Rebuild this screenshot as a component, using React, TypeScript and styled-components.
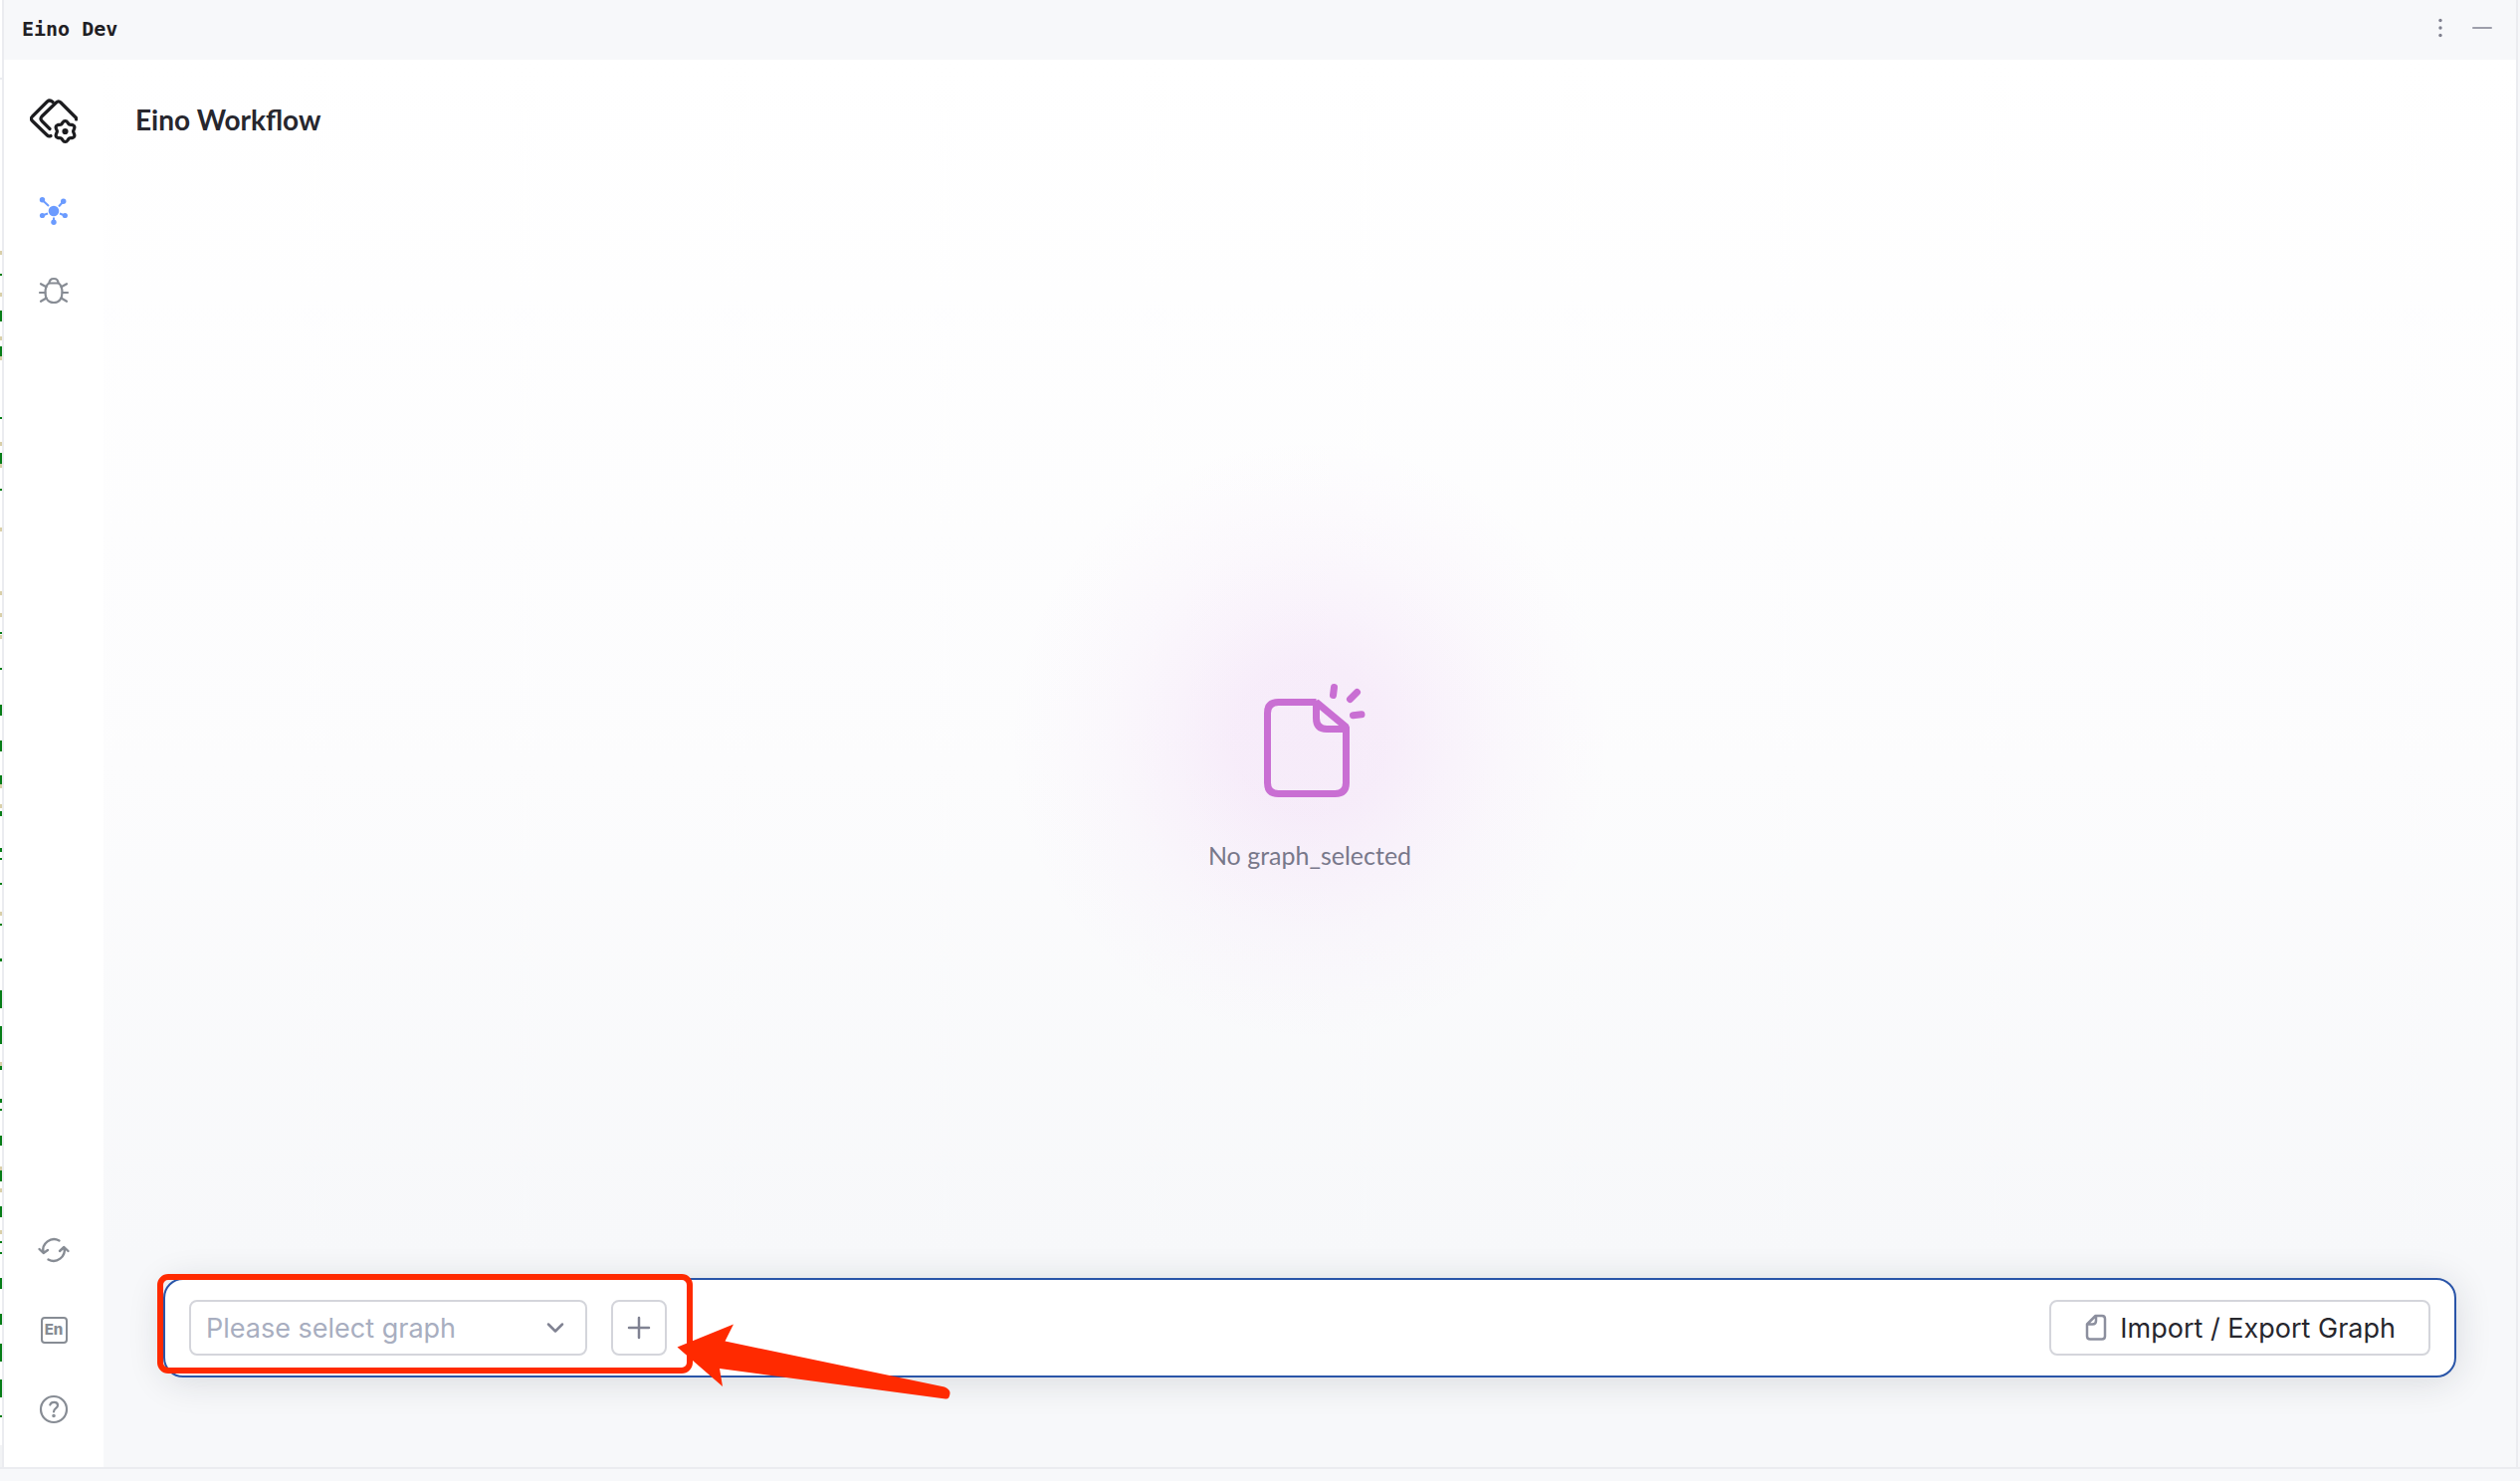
import React from "react";
import styled, { createGlobalStyle } from "styled-components";

const GlobalStyle = createGlobalStyle`
  *, *::before, *::after { box-sizing: border-box; }
  body { margin: 0; background: #f7f8fa; font-family: Inter, "Liberation Sans", sans-serif; }
  button, select { font: inherit; }
`;

const line = "#ebecf0";
const red = "#ff2a00";

/* Visible edge of the code editor to the left of the tool window: [top, height] */
const tanMarks = [252, 294, 338, 358, 444, 466, 530, 594, 616, 638, 788, 808, 916, 1067, 1172, 1194, 1236];
const greenMarks: [number, number][] = [
  [275, 2], [312, 11], [348, 10], [419, 2], [455, 11], [491, 2], [635, 2], [671, 2],
  [708, 11], [744, 11], [779, 9], [815, 5], [852, 4], [862, 2], [887, 2], [928, 2], [963, 3],
  [995, 18], [1031, 18], [1071, 4], [1104, 4], [1114, 2], [1141, 10], [1176, 11], [1212, 11],
  [1247, 2], [1258, 2], [1284, 11], [1320, 11], [1350, 18], [1386, 18], [1422, 2],
];
const mark = (color: string, top: number, height: number) =>
  `linear-gradient(${color}, ${color}) 0 ${top}px / 2px ${height}px no-repeat`;
const editorMarks = [
  mark(line, 78, 2),
  ...greenMarks.map(([top, height]) => mark("#067d17", top, height)),
  ...tanMarks.map((top) => mark("#d9cfa8", top, 4)),
  mark("#f2f3f5", 1452, 22),
  "#fff",
].join(", ");

const Window = styled.div`
  display: flex;
  flex-direction: column;
  min-height: 100vh;
  padding-bottom: 12px;
`;
const Workspace = styled.div`
  flex: 1;
  display: flex;
  border-bottom: 2px solid ${line};
`;
const EditorEdge = styled.div`
  width: 2px;
  background: ${editorMarks};
`;
const ToolWindow = styled.section`
  flex: 1;
  display: flex;
  flex-direction: column;
  margin-right: 2px;
  border: solid ${line};
  border-width: 0 2px;
`;
const TitleBar = styled.header`
  display: flex;
  align-items: center;
  justify-content: space-between;
  height: 60px;
  padding: 0 13px 2px 18px;
  background: #f7f8fa;
`;
const ToolTitle = styled.h1`
  margin: 0;
  color: #1f2024;
  font: 700 20px/28px "DejaVu Sans Mono", monospace;
`;
const TitleActions = styled.div`
  display: flex;
`;
const IconButton = styled.button<{ $size: number; $color: string }>`
  display: flex;
  align-items: center;
  justify-content: center;
  width: ${(p) => p.$size}px;
  height: ${(p) => p.$size}px;
  padding: 0;
  border: 0;
  background: none;
  color: ${(p) => p.$color};
  cursor: pointer;
`;
const Body = styled.div`
  flex: 1;
  display: flex;
`;
const Sidebar = styled.nav`
  display: flex;
  flex-direction: column;
  align-items: center;
  justify-content: space-between;
  width: 100px;
  padding: 36px 0 34px;
  background: #fff;
`;
const NavGroup = styled.div`
  display: flex;
  flex-direction: column;
  align-items: center;
  gap: 32px;
`;
const Logo = styled.svg`
  margin-bottom: 10px;
`;
const LanguageBadge = styled.span`
  width: 27px;
  height: 27px;
  border: 2px solid currentColor;
  border-radius: 4px;
  font-size: 15px;
  font-weight: 800;
  line-height: 22px;
  text-align: center;
`;
const Main = styled.main`
  flex: 1;
  display: flex;
  flex-direction: column;
  padding-bottom: 90px;
  background: linear-gradient(#fff, #fcfcfd 50%, #f7f8fa 85%);
`;
const PageTitle = styled.h2`
  margin: 0;
  padding: 40px 32px;
  color: #27272e;
  font: 700 28px/40px Lato, sans-serif;
`;
const Empty = styled.div`
  flex: 1;
  display: flex;
  flex-direction: column;
  align-items: center;
  justify-content: center;
  gap: 40px;
  padding-top: 94px;
`;
const EmptyArt = styled.div`
  position: relative;
  display: flex;
  &::before {
    content: "";
    position: absolute;
    inset: -244px;
    border-radius: 50%;
    background: radial-gradient(
      closest-side,
      rgba(200, 100, 220, 0.11),
      rgba(200, 100, 220, 0.1) 25%,
      rgba(200, 100, 220, 0.062) 45%,
      rgba(200, 100, 220, 0.03) 65%,
      rgba(200, 100, 220, 0.01) 85%,
      rgba(200, 100, 220, 0)
    );
  }
  svg { position: relative; }
`;
const EmptyText = styled.p`
  position: relative;
  margin: 0;
  color: #78788a;
  font: 400 25px/32px Lato, sans-serif;
`;
const ActionBar = styled.div`
  position: relative;
  display: flex;
  align-items: center;
  gap: 24px;
  height: 100px;
  margin: 0 60px;
  padding: 0 24px;
  border: 2px solid #2a55a8;
  border-radius: 20px;
  background: #fff;
  box-shadow: 0 4px 36px rgba(29, 35, 52, 0.14);
`;
const outlined = `
  height: 56px;
  border: 2px solid #d4d5db;
  border-radius: 8px;
  background: #fff;
`;
const SelectBox = styled.div`
  position: relative;
  width: 400px;
  svg {
    position: absolute;
    top: 16px;
    right: 20px;
    pointer-events: none;
  }
`;
const GraphSelect = styled.select`
  ${outlined}
  display: block;
  width: 100%;
  padding: 0 48px 0 15px;
  appearance: none;
  color: #a8aec0;
  font-size: 27px;
`;
const AddButton = styled.button`
  ${outlined}
  display: flex;
  align-items: center;
  justify-content: center;
  width: 56px;
  padding: 0;
  color: #808292;
`;
const ImportButton = styled.button`
  ${outlined}
  display: flex;
  align-items: center;
  gap: 12px;
  margin-left: auto;
  padding: 0 33px;
  color: #27272e;
  font-size: 27px;
`;
const Annotation = styled.svg`
  position: absolute;
  top: -8px;
  left: -12px;
  pointer-events: none;
`;

const gearPath = () => {
  const points: string[] = [];
  for (let i = 0; i < 72; i++) {
    const a = (i * Math.PI) / 36;
    const r = 9.3 + 1.2 * Math.cos(6 * (a - Math.PI / 2));
    points.push(`${(36 + r * Math.cos(a)).toFixed(2)} ${(36 + r * Math.sin(a)).toFixed(2)}`);
  }
  return `M${points.join("L")}Z`;
};

const stroke = {
  fill: "none",
  stroke: "currentColor",
  strokeLinecap: "round",
  strokeLinejoin: "round",
} as const;

const grey = "#878c94";

export default function App() {
  return (
    <>
      <GlobalStyle />
      <Window>
        <Workspace>
          <EditorEdge />
          <ToolWindow>
            <TitleBar>
              <ToolTitle>Eino Dev</ToolTitle>
              <TitleActions>
                <IconButton $size={42} $color="#7f808f" aria-label="Options">
                  <svg width="24" height="24" fill="currentColor">
                    <circle cx="12" cy="3.5" r="1.7" />
                    <circle cx="12" cy="11" r="1.7" />
                    <circle cx="12" cy="18.5" r="1.7" />
                  </svg>
                </IconButton>
                <IconButton $size={42} $color="#9d9eaa" aria-label="Hide">
                  <svg width="24" height="24" fill="currentColor">
                    <rect x="2" y="10" width="20" height="2" rx="1" />
                  </svg>
                </IconButton>
              </TitleActions>
            </TitleBar>
            <Body>
              <Sidebar>
                <NavGroup>
                  <Logo width="48" height="50" viewBox="0 0 48 50" color="#1c1c1f" aria-label="Eino">
                    <g {...stroke} strokeWidth="3.2" transform="translate(-.5 0)">
                      <path d="M21.5 40.5Q19.5 41.5 18 40L3 25.5Q0.8 23.3 3 21L18 6Q20.5 3.8 23.5 6.5" />
                      <path d="M20.5 33.5L12.5 25.5Q10.5 23.3 12.5 21L27 7Q29.3 4.8 31.5 7L47 22.5V24" />
                      <path d={gearPath()} />
                      <circle cx="36" cy="36" r="1.5" fill="currentColor" />
                    </g>
                  </Logo>
                  <IconButton $size={48} $color="#6b9bff" aria-label="Workflow">
                    <svg width="32" height="32" fill="currentColor">
                      <path
                        d="M4.5 5L11 11M25.5 6.5L21 11.5M4.5 20.5L10 18.5M27 20.5L22 18.5M16 27V22.5"
                        stroke="currentColor"
                        strokeWidth="2"
                      />
                      <circle cx="16" cy="16" r="5.3" />
                      <circle cx="4.5" cy="4.7" r="2.7" />
                      <circle cx="25.7" cy="6.3" r="2.7" />
                      <circle cx="4.5" cy="20.5" r="2.6" />
                      <circle cx="27.3" cy="20.5" r="2.6" />
                      <circle cx="16" cy="27.3" r="2.7" />
                    </svg>
                  </IconButton>
                  <IconButton $size={48} $color={grey} aria-label="Debug">
                    <svg width="32" height="32" {...stroke} strokeWidth="2.2">
                      <path d="M11 8.5H21C23.5 10.500 24.500 13.5 24.500 18C24.500 24.500 21 28 16 28S7.500 24.500 7.500 18C7.500 13.500 8.500 10.500 11 8.500Z" />
                      <path d="M11.500 8.500C11.500 5.500 13.500 4 16 4S20.500 5.500 20.500 8.500M2 18H7.500M24.500 18H30M3 9.200L8.500 12.300M29 9.200L23.500 12.300M3 26.800L8.500 23.500M29 26.800L23.500 23.500" />
                    </svg>
                  </IconButton>
                </NavGroup>
                <NavGroup>
                  <IconButton $size={48} $color={grey} aria-label="Refresh">
                    <svg width="34" height="32" {...stroke} strokeWidth="2.4">
                      <path d="M22.5 6.5A11 11 0 0 0 6.5 18.5M2.500 15L6.7 19L11 16M11.5 25.5A11 11 0 0 0 27.5 13.5M23 17L27.3 13L31.500 17" />
                    </svg>
                  </IconButton>
                  <IconButton $size={48} $color={grey} aria-label="Language: English">
                    <LanguageBadge>En</LanguageBadge>
                  </IconButton>
                  <IconButton $size={48} $color={grey} aria-label="Help">
                    <svg width="32" height="32" {...stroke} strokeWidth="2.2">
                      <circle cx="16" cy="16" r="13" />
                      <path d="M12.3 11.5C13 9.3 14.5 8.9 16.3 8.9C18.5 8.9 20 10.2 20 12C20 15 16 14.8 16 18.5" />
                      <circle cx="16" cy="22.5" r=".7" fill="currentColor" />
                    </svg>
                  </IconButton>
                </NavGroup>
              </Sidebar>
              <Main>
                <PageTitle>Eino Workflow</PageTitle>
                <Empty>
                  <EmptyArt>
                    <svg width="120" height="120" color="#c96fd3" {...stroke} strokeWidth="7">
                      <path
                        strokeLinejoin="bevel"
                        strokeLinecap="butt"
                        d="M66.500 22.5H28.5Q17.5 22.5 17.5 33.5V103.5Q17.5 114.5 28.5 114.5H85.5Q96.5 114.5 96.5 103.5V47.500L66.500 22.5V38.5Q66.500 49.5 77 49.5H96.5"
                      />
                      <path d="M84.5 7.5L83.5 15.5M107.5 12.5L100.5 19.5M103.5 35.7L112 34.8" />
                    </svg>
                  </EmptyArt>
                  <EmptyText>No graph_selected</EmptyText>
                </Empty>
                <ActionBar>
                  <SelectBox>
                    <GraphSelect aria-label="Graph" defaultValue="">
                      <option value="">Please select graph</option>
                    </GraphSelect>
                    <svg width="24" height="24" color="#808292" {...stroke} strokeWidth="2.5">
                      <path d="M5 8.5L12 15.5L19 8.5" />
                    </svg>
                  </SelectBox>
                  <AddButton aria-label="Add graph">
                    <svg width="24" height="24" {...stroke} strokeWidth="2.5">
                      <path d="M12 2V22M2 12H22" />
                    </svg>
                  </AddButton>
                  <ImportButton>
                    <svg width="24" height="28" color="#8c8f9e" {...stroke} strokeWidth="2.5">
                      <path d="M11.5 2H18Q21 2 21 5V22.5Q21 25.5 18 25.5H6Q3 25.5 3 22.5V10.5ZM3 10.5H8.5Q12 10.5 12 7V2" />
                    </svg>
                    Import / Export Graph
                  </ImportButton>
                  <Annotation width="810" height="140" aria-hidden="true">
                    <rect x="7" y="5" width="532" height="94" rx="8" fill="none" stroke={red} strokeWidth="6" />
                    <path
                      fill={red}
                      d="M526.5 75.5L583 52.5L574.5 69.5L795 115.5Q801 118 800.5 122Q800 128 796 127.5L569 97L572 115Z"
                    />
                  </Annotation>
                </ActionBar>
              </Main>
            </Body>
          </ToolWindow>
        </Workspace>
      </Window>
    </>
  );
}
